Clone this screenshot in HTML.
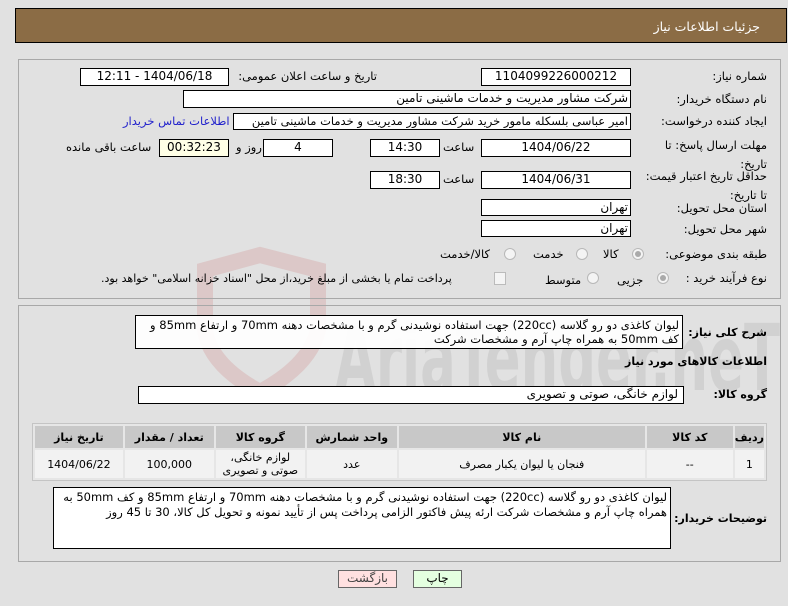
<!DOCTYPE html>
<html><head><meta charset="utf-8">
<style>
body{margin:0;width:788px;height:606px;background:#e1e1e1;font-family:"DejaVu Sans","Liberation Sans",sans-serif;font-size:11.5px;color:#000;position:relative;overflow:hidden}
.a{position:absolute;white-space:nowrap}
.box{position:absolute;background:#fff;border:1px solid #000;box-sizing:border-box;text-align:center;line-height:15px;direction:rtl;font-size:12px}
.lbl{position:absolute;direction:rtl;text-align:right;white-space:nowrap}
.r{position:absolute;width:12px;height:12px;border-radius:50%;border:1px solid #b8b8b8;background:#f4f4f4;box-sizing:border-box}
.panel{position:absolute;border:1px solid #a8a8a8;box-sizing:border-box}
table{border-collapse:separate;border-spacing:2px;background:#e6e6e6;border:1px solid #c4c4c4;position:absolute;direction:rtl;font-size:11px}
th{background:#c8c8c8;font-weight:bold;height:22px;padding:0}
td{background:#f2f2f2;text-align:center;height:28px;padding:0;line-height:13px}
.b{font-weight:bold;font-size:11px;letter-spacing:-0.3px}
</style></head><body>
<svg style="position:absolute;left:0;top:0" width="788" height="606">
<path d="M205 270 L260 255 L318 270 L318 330 Q310 365 260 392 Q210 365 205 330 Z" fill="none" stroke="rgba(200,90,90,0.18)" stroke-width="16"/>
<text x="335" y="390" font-family="DejaVu Sans,sans-serif" font-size="92" font-weight="bold" fill="rgba(110,110,110,0.13)" textLength="445" lengthAdjust="spacingAndGlyphs">AriaTender.neT</text>
</svg>
<div class="a" style="left:15px;top:8px;width:772px;height:35px;background:#8b6c45;border:1px solid #000;box-sizing:border-box"></div>
<div class="lbl" style="right:28px;top:19px;color:#fff;font-size:12.5px">جزئیات اطلاعات نیاز</div>

<div class="panel" style="left:18px;top:59px;width:763px;height:240px"></div>
<div class="lbl" style="right:21px;top:69px">شماره نیاز:</div>
<div class="box" style="left:481px;top:68px;width:150px;height:18px">1104099226000212</div>
<div class="lbl" style="right:411px;top:69px">تاریخ و ساعت اعلان عمومی:</div>
<div class="box" style="left:80px;top:68px;width:149px;height:18px">1404/06/18 - 12:11</div>

<div class="lbl" style="right:21px;top:92px">نام دستگاه خریدار:</div>
<div class="box" style="left:183px;top:90px;width:448px;height:18px;text-align:right;padding-right:2px">شرکت مشاور مدیریت و خدمات ماشینی تامین</div>

<div class="lbl" style="right:21px;top:114px">ایجاد کننده درخواست:</div>
<div class="box" style="left:233px;top:113px;width:398px;height:17px;text-align:right;padding-right:2px;line-height:14px;font-size:11.5px">امیر عباسی بلسکله مامور خرید شرکت مشاور مدیریت و خدمات ماشینی تامین</div>
<div class="lbl" style="left:123px;top:114px;color:#2222cc">اطلاعات تماس خریدار</div>

<div class="lbl" style="right:21px;top:136px;line-height:19px">مهلت ارسال پاسخ: تا<br>تاریخ:</div>
<div class="box" style="left:481px;top:139px;width:150px;height:18px">1404/06/22</div>
<div class="lbl" style="left:443px;top:140px">ساعت</div>
<div class="box" style="left:370px;top:139px;width:70px;height:18px">14:30</div>
<div class="box" style="left:263px;top:139px;width:70px;height:18px">4</div>
<div class="lbl" style="left:236px;top:140px">روز و</div>
<div class="box" style="left:159px;top:139px;width:70px;height:18px;background:#ffffe6">00:32:23</div>
<div class="lbl" style="left:66px;top:140px">ساعت باقی مانده</div>

<div class="lbl" style="right:21px;top:167px;line-height:19px">حداقل تاریخ اعتبار قیمت:<br>تا تاریخ:</div>
<div class="box" style="left:481px;top:171px;width:150px;height:18px">1404/06/31</div>
<div class="lbl" style="left:443px;top:172px">ساعت</div>
<div class="box" style="left:370px;top:171px;width:70px;height:18px">18:30</div>

<div class="lbl" style="right:21px;top:201px">استان محل تحویل:</div>
<div class="box" style="left:481px;top:199px;width:150px;height:17px;text-align:right;padding-right:2px">تهران</div>
<div class="lbl" style="right:21px;top:222px">شهر محل تحویل:</div>
<div class="box" style="left:481px;top:220px;width:150px;height:17px;text-align:right;padding-right:2px">تهران</div>

<div class="lbl" style="right:21px;top:247px">طبقه بندی موضوعی:</div>
<div class="r" style="left:632px;top:248px"><div style="width:6px;height:6px;border-radius:50%;background:#aaa;margin:2px"></div></div>
<div class="lbl" style="left:603px;top:247px">کالا</div>
<div class="r" style="left:576px;top:248px"></div>
<div class="lbl" style="left:533px;top:247px">خدمت</div>
<div class="r" style="left:504px;top:248px"></div>
<div class="lbl" style="left:440px;top:247px">کالا/خدمت</div>

<div class="lbl" style="right:21px;top:271px">نوع فرآیند خرید :</div>
<div class="r" style="left:657px;top:272px"><div style="width:6px;height:6px;border-radius:50%;background:#aaa;margin:2px"></div></div>
<div class="lbl" style="left:617px;top:273px">جزیی</div>
<div class="r" style="left:587px;top:272px"></div>
<div class="lbl" style="left:545px;top:273px">متوسط</div>
<div class="a" style="left:494px;top:272px;width:10px;height:11px;border:1px solid #bbb;background:#f4f4f4"></div>
<div class="lbl" style="left:101px;top:272px;font-size:11px">پرداخت تمام یا بخشی از مبلغ خرید،از محل "اسناد خزانه اسلامی" خواهد بود.</div>

<div class="panel" style="left:18px;top:305px;width:763px;height:257px"></div>
<div class="lbl b" style="right:21px;top:326px">شرح کلی نیاز:</div>
<div class="box" style="left:135px;top:315px;width:548px;height:34px;text-align:right;padding:2px 3px;line-height:14px;white-space:normal;font-size:11.5px;background:rgba(255,255,255,0.92)">لیوان کاغذی دو رو گلاسه (220cc) جهت استفاده نوشیدنی گرم و با مشخصات دهنه 70mm و ارتفاع 85mm و کف 50mm به همراه چاپ آرم و مشخصات شرکت</div>
<div class="lbl b" style="right:21px;top:355px">اطلاعات کالاهای مورد نیاز</div>
<div class="lbl b" style="right:21px;top:388px">گروه کالا:</div>
<div class="box" style="left:138px;top:386px;width:546px;height:18px;text-align:right;padding-right:5px">لوازم خانگی، صوتی و تصویری</div>

<table style="left:32px;top:423px;width:735px">
<tr><th style="width:26px">ردیف</th><th style="width:86px">کد کالا</th><th style="width:246px">نام کالا</th><th style="width:90px">واحد شمارش</th><th style="width:89px">گروه کالا</th><th style="width:89px">تعداد / مقدار</th><th>تاریخ نیاز</th></tr>
<tr><td>1</td><td>--</td><td>فنجان یا لیوان یکبار مصرف</td><td>عدد</td><td>لوازم خانگی،<br>صوتی و تصویری</td><td>100,000</td><td>1404/06/22</td></tr>
</table>

<div class="lbl b" style="right:21px;top:512px">توضیحات خریدار:</div>
<div class="box" style="left:53px;top:487px;width:618px;height:62px;text-align:right;padding:2px 3px;line-height:15px;white-space:normal;font-size:11.5px">لیوان کاغذی دو رو گلاسه (220cc) جهت استفاده نوشیدنی گرم و با مشخصات دهنه 70mm و ارتفاع 85mm و کف 50mm به همراه چاپ آرم و مشخصات شرکت ارئه پیش فاکتور الزامی پرداخت پس از تأیید نمونه و تحویل کل کالا، 30 تا 45 روز</div>

<div class="box" style="left:338px;top:570px;width:59px;height:18px;background:#ffe0e0;border-color:#666;color:#444">بازگشت</div>
<div class="box" style="left:413px;top:570px;width:49px;height:18px;background:#e4ffe0;border-color:#666">چاپ</div>
</body></html>
